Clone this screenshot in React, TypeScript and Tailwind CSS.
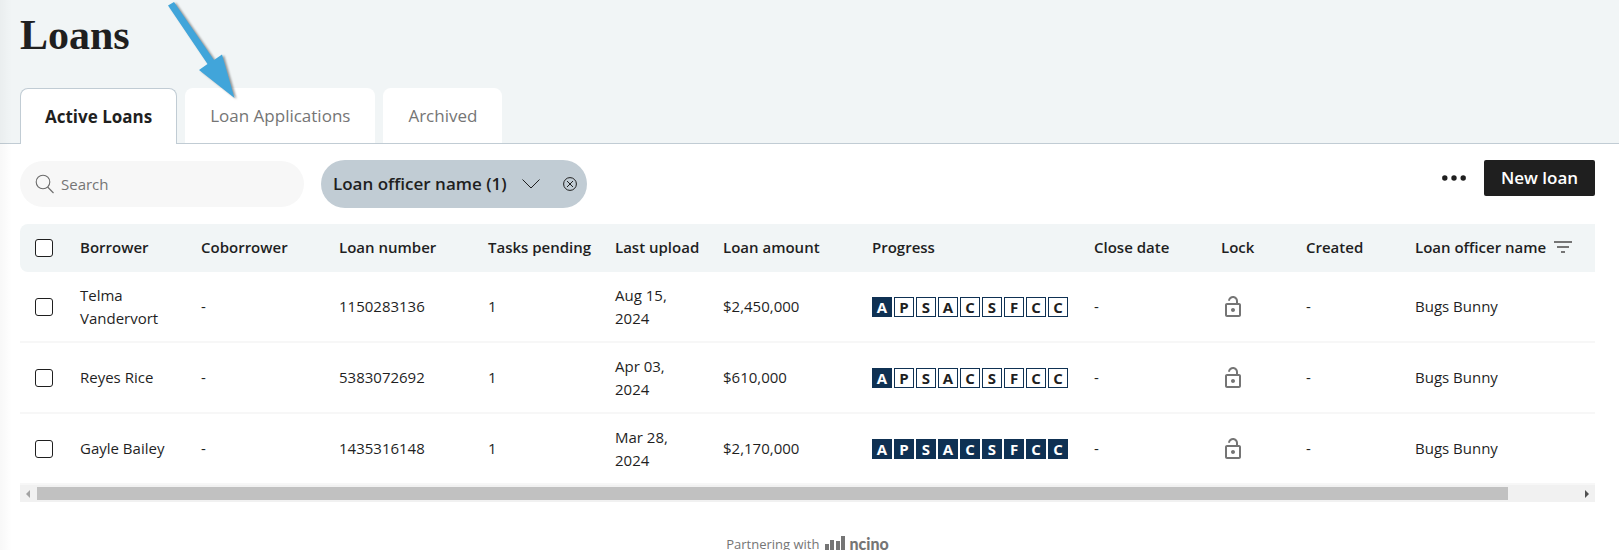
import React from 'react';

interface Loan {
  id: string;
  borrower: string;
  lastUpload: string;
  amount: string;
  done: number;
}

const LOANS: Loan[] = [
  { id: '1150283136', borrower: 'Telma Vandervort', lastUpload: 'Aug 15, 2024', amount: '$2,450,000', done: 1 },
  { id: '5383072692', borrower: 'Reyes Rice', lastUpload: 'Apr 03, 2024', amount: '$610,000', done: 1 },
  { id: '1435316148', borrower: 'Gayle Bailey', lastUpload: 'Mar 28, 2024', amount: '$2,170,000', done: 9 },
];

const STAGES = ['A', 'P', 'S', 'A', 'C', 'S', 'F', 'C', 'C'];

const COLUMNS = [
  { label: 'Borrower', width: 'w-[121px]' },
  { label: 'Coborrower', width: 'w-[138px]' },
  { label: 'Loan number', width: 'w-[149px]' },
  { label: 'Tasks pending', width: 'w-[127px]' },
  { label: 'Last upload', width: 'w-[108px]' },
  { label: 'Loan amount', width: 'w-[149px]' },
  { label: 'Progress', width: 'w-[222px]' },
  { label: 'Close date', width: 'w-[127px]' },
  { label: 'Lock', width: 'w-[85px]' },
  { label: 'Created', width: 'w-[109px]' },
];

const SearchIcon = () => (
  <svg className="w-5 h-5 shrink-0" viewBox="0 0 20 20" fill="none" stroke="#6b6b6b" strokeWidth="1.1">
    <circle cx="8" cy="8" r="6.8" />
    <path d="M12.6 13 18.5 19" />
  </svg>
);

const LockIcon = () => (
  <svg className="w-6 h-6" viewBox="0 0 24 24" fill="#757575" role="img" aria-label="Unlocked">
    <path d="M12 17c1.1 0 2-.9 2-2s-.9-2-2-2-2 .9-2 2 .9 2 2 2zm6-9h-1V6c0-2.76-2.24-5-5-5-2.28 0-4.27 1.54-4.84 3.75-.14.54.18 1.08.72 1.22.53.14 1.08-.18 1.22-.72C9.44 3.93 10.63 3 12 3c1.65 0 3 1.35 3 3v2H6c-1.1 0-2 .9-2 2v10c0 1.1.9 2 2 2h12c1.1 0 2-.9 2-2V10c0-1.1-.9-2-2-2zm0 12H6V10h12v10z" />
  </svg>
);

const Checkbox: React.FC<{ label: string }> = ({ label }) => (
  <input
    type="checkbox"
    aria-label={label}
    className="block appearance-none w-[18px] h-[18px] rounded-[3px] border border-[#1f1f1f] bg-white"
  />
);

const Cell: React.FC<{ children: React.ReactNode }> = ({ children }) => (
  <td className="pl-3 pr-5 border-b-2 border-[#f7f7f7]">{children}</td>
);

const Progress: React.FC<{ done: number }> = ({ done }) => (
  <div className="flex gap-0.5 -mr-5">
    {STAGES.map((stage, i) => (
      <span
        key={i}
        className={`w-5 h-5 shrink-0 border border-[#0f3153] text-center text-[15px] leading-[18px] font-bold ${
          i < done ? 'bg-[#0f3153] text-white' : 'bg-white text-[#1f1f1f]'
        }`}
      >
        {stage}
      </span>
    ))}
  </div>
);

const Arrow = () => (
  <svg className="absolute left-[160px] top-0 w-[90px] h-[110px] pointer-events-none drop-shadow-[2px_1px_1px_rgba(0,0,0,0.4)]" viewBox="0 0 90 110" aria-hidden="true">
    <path d="M14 2 8 5.5 47.5 64 39 70 74.5 98 62 54.5 54 60Z" fill="#41a5da" />
  </svg>
);

export default function App() {
  return (
    <div className="relative min-h-screen bg-white text-[#1f1f1f] font-['Open_Sans',sans-serif] overflow-hidden">
      <header className="bg-[#f1f5f6] border-b border-[#c1ccd4] px-5 pt-3">
        <h1 className="font-['Liberation_Serif',serif] text-[42px] leading-[46px] font-bold">Loans</h1>
        <nav className="flex gap-2 mt-[30px] -mb-px" role="tablist">
          <button role="tab" aria-selected="true" className="h-14 px-6 rounded-t-lg border border-b-0 border-[#c1ccd4] bg-white text-[17px] font-bold">
            Active Loans
          </button>
          <button role="tab" aria-selected="false" className="h-[55px] px-[25px] rounded-t-lg bg-white text-[17px] text-[#757575]">
            Loan Applications
          </button>
          <button role="tab" aria-selected="false" className="h-[55px] px-[25px] rounded-t-lg bg-white text-[17px] text-[#757575]">
            Archived
          </button>
        </nav>
      </header>

      <main className="pl-5 pr-6 pt-4">
        <div className="flex items-start">
          <label className="flex items-center gap-1.5 w-[284px] h-[46px] mt-px pl-[15px] rounded-full bg-[#f7f7f7]">
            <SearchIcon />
            <input type="text" aria-label="Search" placeholder="Search" className="w-full bg-transparent outline-none text-[15px] placeholder:text-[#757575]" />
          </label>
          <div className="flex items-center h-12 ml-[17px] pl-3 pr-2.5 rounded-full bg-[#c1ccd4]">
            <button className="flex items-center gap-[15px] text-[17px] font-semibold">
              Loan officer name (1)
              <svg className="w-[18px] h-[10px]" viewBox="0 0 18 10" fill="none" stroke="#1f1f1f">
                <path d="M.5.5 9 9 17.5.5" />
              </svg>
            </button>
            <button aria-label="Clear filter" className="ml-[23px]">
              <svg className="w-[14px] h-[14px]" viewBox="0 0 14 14" fill="none" stroke="#1f1f1f">
                <circle cx="7" cy="7" r="6.4" />
                <path d="m4 4 6 6m0-6-6 6" />
              </svg>
            </button>
          </div>
          <div className="flex items-center gap-[18px] ml-auto">
            <button aria-label="More actions">
              <svg className="w-6 h-6" viewBox="0 0 24 24" fill="#1f1f1f">
                <circle cx="2.8" cy="12" r="2.7" />
                <circle cx="12" cy="12" r="2.7" />
                <circle cx="21.2" cy="12" r="2.7" />
              </svg>
            </button>
            <button className="h-9 w-[111px] rounded-xs bg-[#1f1f1f] text-[17px] font-semibold text-white">New loan</button>
          </div>
        </div>

        <div className="mt-4 overflow-hidden">
          <table className="w-full table-fixed border-separate border-spacing-0 text-left text-[15px] leading-[23px]">
            <thead>
              <tr className="h-12 bg-[#f1f5f6]">
                <th className="w-12 pl-[15px] rounded-l-lg"><Checkbox label="Select all loans" /></th>
                {COLUMNS.map((column) => (
                  <th key={column.label} className={`${column.width} pl-3 pb-0.5 font-semibold whitespace-nowrap`}>{column.label}</th>
                ))}
                <th className="pl-3 pb-0.5 font-semibold whitespace-nowrap">
                  <div className="flex items-center gap-2">
                    Loan officer name
                    <svg className="w-[18px] h-3" viewBox="0 0 18 12" fill="#757575">
                      <path d="M0 0h18v2H0zM3 5h12v2H3zM7 10h4v2H7z" />
                    </svg>
                  </div>
                </th>
              </tr>
            </thead>
            <tbody>
              {LOANS.map((loan) => (
                <tr key={loan.id} className="h-[71px]">
                  <td className="pl-[15px] border-b-2 border-[#f7f7f7]"><Checkbox label={`Select ${loan.borrower}`} /></td>
                  <Cell>{loan.borrower}</Cell>
                  <Cell>-</Cell>
                  <Cell>{loan.id}</Cell>
                  <Cell>1</Cell>
                  <Cell>{loan.lastUpload}</Cell>
                  <Cell>{loan.amount}</Cell>
                  <Cell><Progress done={loan.done} /></Cell>
                  <Cell>-</Cell>
                  <Cell><LockIcon /></Cell>
                  <Cell>-</Cell>
                  <Cell>Bugs Bunny</Cell>
                </tr>
              ))}
            </tbody>
          </table>
          <div className="flex items-center h-[17px] bg-[#f1f1f1]">
            <svg className="w-[17px] h-[17px] shrink-0" viewBox="0 0 17 17" fill="#a3a3a3"><path d="M10 5v8L6 9z" /></svg>
            <div className="grow-21 h-[13px] bg-[#c1c1c1]" />
            <div className="grow" />
            <svg className="w-[17px] h-[17px] shrink-0" viewBox="0 0 17 17" fill="#505050"><path d="M7 5v8l4-4z" /></svg>
          </div>
        </div>

        <footer className="flex justify-center items-center gap-1.5 mt-7 text-[13px] leading-7 text-[#757575]">
          Partnering with
          <span className="flex items-end gap-1">
            <svg className="w-5 h-4" viewBox="0 0 20 16" fill="#757575" aria-hidden="true">
              <path d="M0 8h4v8H0zM5 4h4v12H5zM11 5h4v11h-4zM16 0h4v16h-4z" />
            </svg>
            <span className="font-['Lato',sans-serif] text-base leading-4 font-black">ncino</span>
          </span>
        </footer>
      </main>
      <div className="absolute left-0 inset-y-0 w-3 bg-linear-to-r from-black/3 to-transparent pointer-events-none" />
      <Arrow />
    </div>
  );
}
